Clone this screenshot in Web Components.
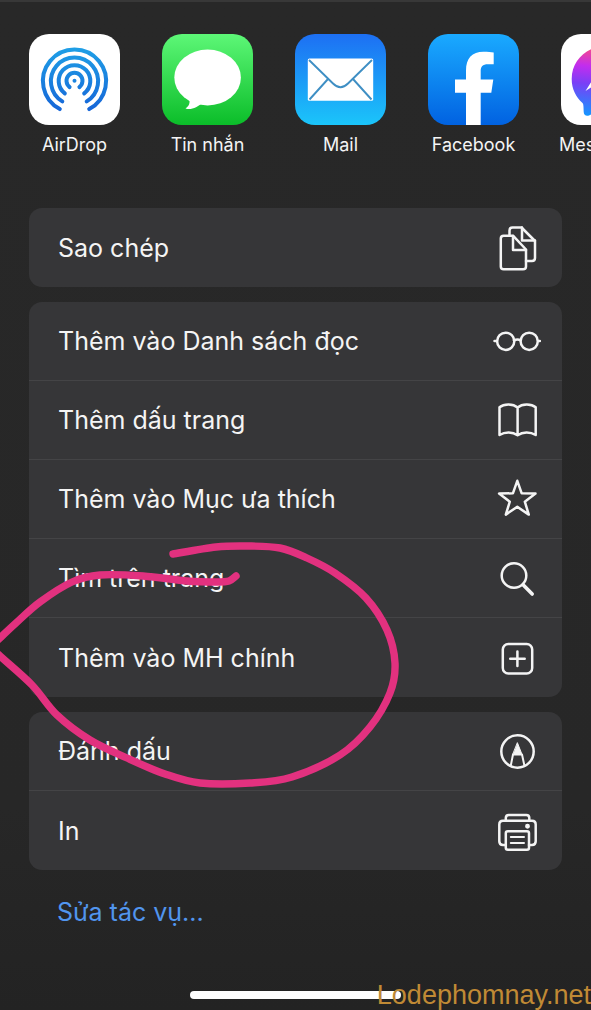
<!DOCTYPE html>
<html lang="vi">
<head>
<meta charset="utf-8">
<meta name="viewport" content="width=device-width, initial-scale=1">
<title>Chia sẻ</title>
<style>
    html {
        background: #242424;
    }
    body {
        margin: 0;
        font-family: Inter, "Liberation Sans", sans-serif;
        color: #f4f4f4;
    }
</style>
</head>
<body>

<share-sheet>
    <share-app slot="apps" icon="airdrop">AirDrop</share-app>
    <share-app slot="apps" icon="messages">Tin nhắn</share-app>
    <share-app slot="apps" icon="mail">Mail</share-app>
    <share-app slot="apps" icon="facebook">Facebook</share-app>
    <share-app slot="apps" icon="messenger">Messenger</share-app>

    <action-group>
        <action-row icon="copy">Sao chép</action-row>
    </action-group>
    <action-group>
        <action-row icon="glasses">Thêm vào Danh sách đọc</action-row>
        <action-row icon="book">Thêm dấu trang</action-row>
        <action-row icon="star">Thêm vào Mục ưa thích</action-row>
        <action-row icon="search">Tìm trên trang</action-row>
        <action-row icon="plus">Thêm vào MH chính</action-row>
    </action-group>
    <action-group>
        <action-row icon="markup">Đánh dấu</action-row>
        <action-row icon="print">In</action-row>
    </action-group>

    <a slot="edit" href="#edit">Sửa tác vụ...</a>
    <ink-stroke slot="overlay"></ink-stroke>
    <span slot="watermark">Lodephomnay.net</span>
</share-sheet>

<script>
// App icons, drawn on a 91 x 91 tile
const APP_ICONS = {
    airdrop: `
        <defs><linearGradient id="g" gradientUnits="userSpaceOnUse" x1="0" y1="14" x2="0" y2="76">
            <stop offset="0" stop-color="#1f9fe6"/><stop offset="1" stop-color="#1666d8"/>
        </linearGradient></defs>
        <rect width="91" height="91" fill="#fff"/>
        <g fill="none" stroke="url(#g)" stroke-width="4" stroke-linecap="round">
            <path d="M30.8 75.1A31.6 31.6 0 1 1 60.2 75.1"/>
            <path d="M33.3 67.4A23.6 23.6 0 1 1 57.7 67.4"/>
            <path d="M35.8 59.4A15.8 15.8 0 1 1 55.2 59.4"/>
            <path d="M40.6 53.1A8 8 0 1 1 50.4 53.1"/>
        </g>
        <circle cx="45.5" cy="46.8" r="2" fill="#1c84e0"/>`,
    messages: `
        <defs><linearGradient id="g" x1="0" y1="0" x2="0" y2="1">
            <stop offset="0" stop-color="#5df777"/><stop offset="1" stop-color="#0bbd29"/>
        </linearGradient></defs>
        <rect width="91" height="91" fill="url(#g)"/>
        <ellipse cx="45.6" cy="43.5" rx="33.3" ry="28" fill="#fff"/>
        <path d="M27 64C28.5 69 27 72 23.5 74.5C29 76.5 36 73 40 69Z" fill="#fff"/>`,
    mail: `
        <defs><linearGradient id="g" x1="0" y1="0" x2="0" y2="1">
            <stop offset="0" stop-color="#1d6ff3"/><stop offset="1" stop-color="#1bc5fa"/>
        </linearGradient></defs>
        <rect width="91" height="91" fill="url(#g)"/>
        <rect x="12.8" y="24.5" width="65.4" height="42.3" rx="1.5" fill="#fff"/>
        <g fill="none" stroke="#3f8fc4" stroke-width="1.9">
            <path d="M14 26L38 49.5Q45.5 57 53 49.5L77 26"/>
            <path d="M33 45L14.5 65.5M58 45L76.5 65.5"/>
        </g>`,
    facebook: `
        <defs><linearGradient id="g" x1="0" y1="0" x2="0" y2="1">
            <stop offset="0" stop-color="#1aaaff"/><stop offset="1" stop-color="#0162e1"/>
        </linearGradient></defs>
        <rect width="91" height="91" fill="url(#g)"/>
        <path fill="#fff" d="M38 91V58.8H27V45.5H38V36.5C38 24.5 44 17.8 55.5 17.8C60 17.8 63 18 65.7 18.5V30.3H60C54.5 30.3 52.7 33 52.7 37V45.5H65.3L63.3 58.8H52.7V91Z"/>`,
    messenger: `
        <defs><linearGradient id="g" x1="0.4" y1="0" x2="0.3" y2="1">
            <stop offset="0" stop-color="#ff4f79"/><stop offset="0.3" stop-color="#c22dee"/>
            <stop offset="0.55" stop-color="#7a3ff6"/><stop offset="1" stop-color="#1595ff"/>
        </linearGradient></defs>
        <rect width="91" height="91" fill="#fff"/>
        <path fill="url(#g)" d="M45.5 12C26 12 10.7 26 10.7 45C10.7 55 15 63 21.5 69C22.5 70 22.5 72 22.7 78C22.7 81 25 82.5 28 81.5L35 78C60 84 80.3 67 80.3 45C80.3 26 65 12 45.5 12Z"/>
        <path fill="#fff" d="M24.5 57L35 40.5Q38 37 42 39.5L49 45L66.5 34L56 50.5Q53 54 49 51.5L42 46Z"/>`
};

// Action icons, line art on a 48 x 48 box
const ACTION_ICONS = {
    copy: `
        <path d="M16.5 11.5V6.5Q16.5 3.5 19.5 3.5H28.5L42 17V34Q42 37 39 37H33"/>
        <path d="M29 3.5V16.5H42"/>
        <path d="M10.7 11.7H20L33 25.5V42.5Q33 45.3 30 45.3H10.7Q7.8 45.3 7.8 42.5V14.5Q7.8 11.7 10.7 11.7Z"/>
        <path d="M20 12V26H33"/>`,
    glasses: `
        <circle cx="12.7" cy="24.3" r="8.6"/><circle cx="36.2" cy="24.3" r="8.6"/>
        <path d="M1.5 24H4M45 24H47M21 23.3Q24.4 21.5 27.8 23.3"/>`,
    book: `
        <path d="M24.6 11.5C20 7.5 11 7.5 6.5 11.3V39C12 35.5 19.5 35.5 24.6 39.2C29.7 35.5 37.2 35.5 42.7 39V11.3C38.2 7.5 29.2 7.5 24.6 11.5V39"/>`,
    star: `
        <path d="M24.3 5.8L28.7 18.3L42.5 18.6L31.8 26.7L35.8 39.6L24.3 31.8L12.8 39.6L16.8 26.7L6.1 18.6L19.9 18.3Z"/>`,
    search: `
        <circle cx="21" cy="21.5" r="12.3"/>
        <path d="M30.3 31L39.2 40" stroke-width="3.6"/>`,
    plus: `
        <rect x="9.8" y="10" width="29.4" height="29.4" rx="5.5"/>
        <path d="M24.4 17.5V32M17.2 24.7H31.7"/>`,
    markup: `
        <circle cx="24.5" cy="24.5" r="16.2"/>
        <path d="M17.7 39L20 27.5H29L31.5 39" stroke-width="2"/>
        <path d="M24.5 16L29 27.5H20Z" fill="currentColor" stroke-width="1"/>`,
    print: `
        <path d="M12.8 13.5V11Q12.8 8 15.8 8H33.3Q36.3 8 36.3 11V13.5"/>
        <path d="M12.8 38H10Q6.3 38 6.3 34.3V17.5Q6.3 13.7 10 13.7H39Q42.7 13.7 42.7 17.5V34.3Q42.7 38 39 38H36"/>
        <rect x="12.8" y="24.2" width="23.2" height="18.5" rx="2"/>
        <path d="M17.8 30H31M17.8 36H31" stroke-width="2"/>
        <circle cx="34.5" cy="19.2" r="1.2" fill="currentColor"/>`
};

class ShareSheet extends HTMLElement {
    constructor() {
        super();
        this.attachShadow({ mode: 'open' });
    }

    connectedCallback() {
        this.shadowRoot.innerHTML = `
            <style>
                :host {
                    display: flex;
                    flex-direction: column;
                    position: relative;
                    box-sizing: border-box;
                    min-height: 100vh;
                    overflow: hidden;
                    border-top: 2px solid #383838;
                    background: linear-gradient(#282828, #272727 80%, #232323);
                }
                .apps {
                    display: flex;
                    gap: 42px;
                    padding: 32px 0 51px 29px;
                    overflow: hidden;
                }
                main {
                    display: flex;
                    flex-direction: column;
                    gap: 15px;
                    padding: 0 29px;
                }
                .edit {
                    padding: 24px 57px;
                    font-size: 25px;
                    line-height: 36px;
                }
                ::slotted(a) {
                    color: #5195ee;
                    text-decoration: none;
                }
                .home {
                    width: 211px;
                    height: 8px;
                    margin: auto auto 11px;
                    border-radius: 4px;
                    background: #fff;
                }
                /* Stamped over the home indicator */
                .watermark {
                    position: absolute;
                    right: 0;
                    bottom: 0;
                    color: #c08a35;
                    font: 27px/30px "Liberation Sans", sans-serif;
                }
            </style>
            <nav class="apps"><slot name="apps"></slot></nav>
            <main><slot></slot></main>
            <div class="edit"><slot name="edit"></slot></div>
            <div class="home"></div>
            <slot name="overlay"></slot>
            <div class="watermark"><slot name="watermark"></slot></div>
        `;
    }
}

class ShareApp extends HTMLElement {
    constructor() {
        super();
        this.attachShadow({ mode: 'open' });
    }

    connectedCallback() {
        this.shadowRoot.innerHTML = `
            <style>
                :host {
                    display: block;
                    flex: none;
                    width: 91px;
                }
                button {
                    display: flex;
                    flex-direction: column;
                    align-items: center;
                    gap: 8px;
                    width: 100%;
                    padding: 0;
                    border: 0;
                    background: none;
                    color: inherit;
                    font: 18px/24px Inter, "Liberation Sans", sans-serif;
                    white-space: nowrap;
                }
                svg {
                    flex: none;
                    width: 91px;
                    height: 91px;
                    border-radius: 20px;
                }
            </style>
            <button type="button">
                <svg viewBox="0 0 91 91" aria-hidden="true">${APP_ICONS[this.getAttribute('icon')]}</svg>
                <span><slot></slot></span>
            </button>
        `;
    }
}

class ActionGroup extends HTMLElement {
    constructor() {
        super();
        this.attachShadow({ mode: 'open' });
    }

    connectedCallback() {
        this.shadowRoot.innerHTML = `
            <style>
                :host {
                    display: block;
                    overflow: hidden;
                    border-radius: 13px;
                    background: #363638;
                }
                ::slotted(action-row:not(:last-child)) {
                    border-bottom: 1px solid #444446;
                }
            </style>
            <slot></slot>
        `;
    }
}

class ActionRow extends HTMLElement {
    constructor() {
        super();
        this.attachShadow({ mode: 'open' });
    }

    connectedCallback() {
        this.shadowRoot.innerHTML = `
            <style>
                :host {
                    display: flex;
                    box-sizing: border-box;
                    height: 79px;
                }
                button {
                    display: flex;
                    flex: 1;
                    align-items: center;
                    justify-content: space-between;
                    padding: 0 21px 0 29px;
                    border: 0;
                    background: none;
                    color: inherit;
                    font: 25px/36px Inter, "Liberation Sans", sans-serif;
                    text-align: left;
                }
                svg {
                    flex: none;
                    width: 48px;
                    height: 48px;
                    fill: none;
                    stroke: currentColor;
                    stroke-width: 2.5;
                    stroke-linecap: round;
                    stroke-linejoin: round;
                }
            </style>
            <button type="button">
                <span><slot></slot></span>
                <svg viewBox="0 0 48 48" aria-hidden="true">${ACTION_ICONS[this.getAttribute('icon')]}</svg>
            </button>
        `;
    }
}

/**
 * Freehand marker line round the "add to home screen" row.
 */
class InkStroke extends HTMLElement {
    constructor() {
        super();
        this.attachShadow({ mode: 'open' });
    }

    connectedCallback() {
        const points = [
            [173, 554], [216, 547], [247, 546], [280, 548], [307, 558], [335, 573],
            [366, 598], [387, 630], [395, 663], [390, 693], [370, 727], [340, 755],
            [292, 777], [250, 783], [200, 783], [165, 774], [127, 758], [90, 740],
            [57, 715], [32, 685], [0, 656], [-9, 647], [0, 638], [16, 623],
            [40, 602], [72, 582], [100, 575],
            [143, 576], [187, 581], [217, 582], [229, 581], [236, 576]
        ];

        this.shadowRoot.innerHTML = `
            <style>
                :host {
                    position: absolute;
                    top: -2px;
                    left: 0;
                    pointer-events: none;
                }
                svg {
                    display: block;
                    width: 400px;
                    height: 800px;
                    fill: none;
                    stroke: #e2317f;
                    stroke-width: 7.4;
                    stroke-linecap: round;
                    stroke-linejoin: round;
                }
            </style>
            <svg viewBox="0 0 400 800" aria-hidden="true"><path d="${this.smooth(points)}"/></svg>
        `;
    }

    // Catmull-Rom through the points, written as cubic curves
    smooth(p) {
        let d = `M${p[0]}`;
        for (let i = 0; i < p.length - 1; i++) {
            const a = p[i - 1] || p[i];
            const b = p[i];
            const c = p[i + 1];
            const e = p[i + 2] || c;
            d += `C${b[0] + (c[0] - a[0]) / 6},${b[1] + (c[1] - a[1]) / 6}`
               + ` ${c[0] - (e[0] - b[0]) / 6},${c[1] - (e[1] - b[1]) / 6} ${c}`;
        }
        return d;
    }
}

customElements.define('share-sheet', ShareSheet);
customElements.define('share-app', ShareApp);
customElements.define('action-group', ActionGroup);
customElements.define('action-row', ActionRow);
customElements.define('ink-stroke', InkStroke);
</script>
</body>
</html>
